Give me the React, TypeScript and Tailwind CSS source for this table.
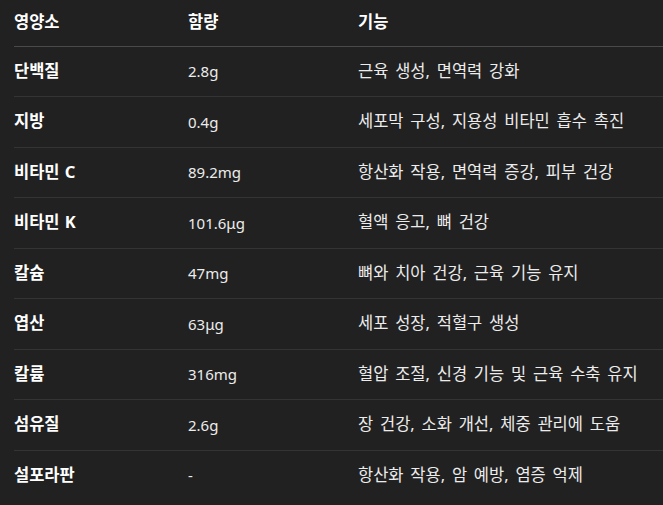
import React from "react";

const rows = [
  ["단백질", "2.8g", "근육 생성, 면역력 강화"],
  ["지방", "0.4g", "세포막 구성, 지용성 비타민 흡수 촉진"],
  ["비타민 C", "89.2mg", "항산화 작용, 면역력 증강, 피부 건강"],
  ["비타민 K", "101.6μg", "혈액 응고, 뼈 건강"],
  ["칼슘", "47mg", "뼈와 치아 건강, 근육 기능 유지"],
  ["엽산", "63μg", "세포 성장, 적혈구 생성"],
  ["칼륨", "316mg", "혈압 조절, 신경 기능 및 근육 수축 유지"],
  ["섬유질", "2.6g", "장 건강, 소화 개선, 체중 관리에 도움"],
  ["설포라판", "-", "항산화 작용, 암 예방, 염증 억제"],
];

export default function App() {
  return (
    <div
      className="w-[663px] h-[505px] overflow-hidden bg-[#212121] pl-[14px] text-[15px] text-[#ececec]"
      style={{ fontFamily: '"Noto Sans", "Noto Sans CJK KR", sans-serif' }}
    >
      <table className="w-[700px] border-collapse text-left">
        <thead>
          <tr className="h-[46px] border-b border-[#4a4a4a] text-[16.5px] [word-spacing:2.5px]">
            <th className="w-[174px] p-0 font-bold text-white">영양소</th>
            <th className="w-[170px] p-0 font-bold text-white">함량</th>
            <th className="p-0 font-bold text-white">기능</th>
          </tr>
        </thead>
        <tbody>
          {rows.map((r, i) => (
            <tr
              key={r[0]}
              className={
                i < rows.length - 1
                  ? "h-[50.5px] border-b border-[#343434]"
                  : "h-[50.5px]"
              }
            >
              <td className="p-0 text-[16.5px] font-bold text-white [word-spacing:1px]">{r[0]}</td>
              <td className="p-0">{r[1]}</td>
              <td className="p-0 text-[16.5px] [word-spacing:2.5px]">{r[2]}</td>
            </tr>
          ))}
        </tbody>
      </table>
    </div>
  );
}
